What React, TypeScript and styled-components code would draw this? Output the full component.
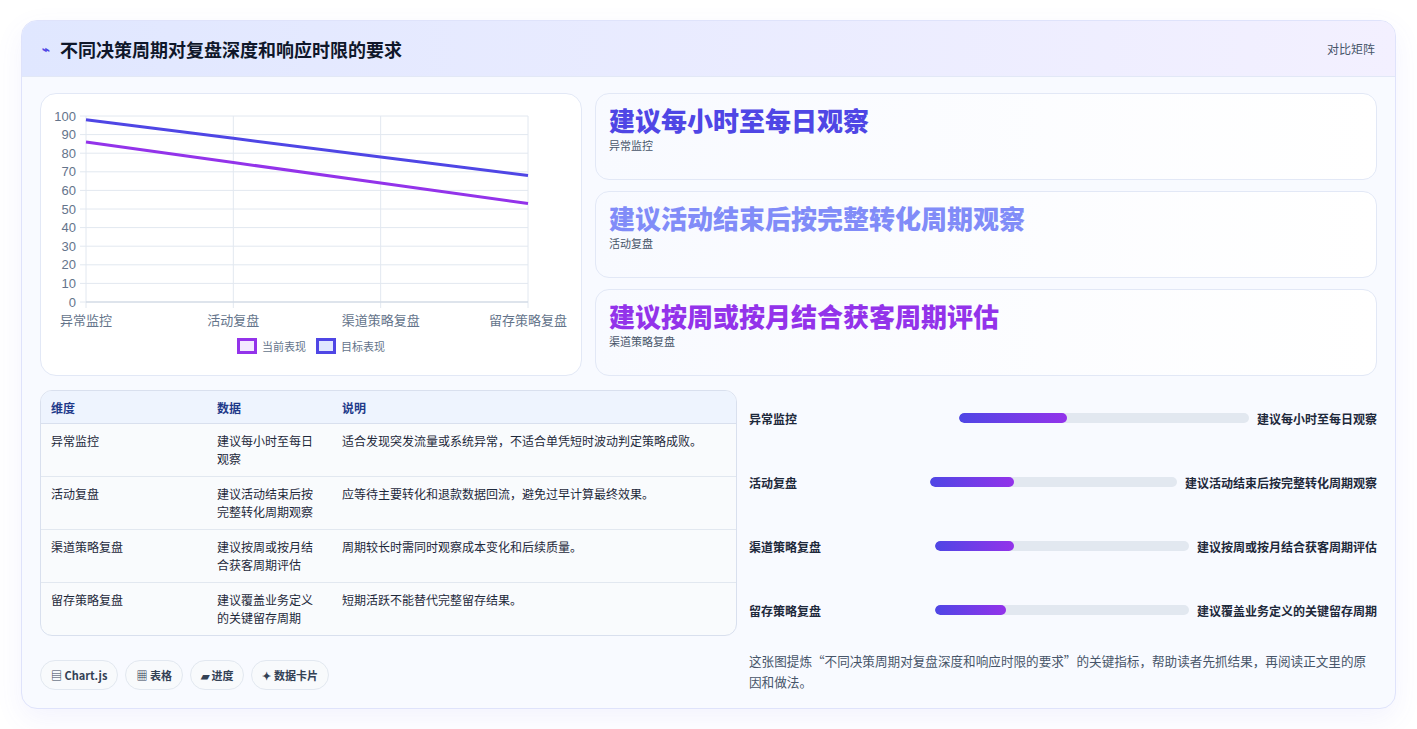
import React from "react";
import styled, { createGlobalStyle } from "styled-components";

const GlobalStyle = createGlobalStyle`
  body {
    margin: 0;
    background: #ffffff;
    font-family: "Noto Sans CJK SC", "Noto Sans", sans-serif;
    color: #1e293b;
  }
`;

const rows = [
  { dim: "异常监控", data: "建议每小时至每日观察", note: "适合发现突发流量或系统异常，不适合单凭短时波动判定策略成败。", pct: 37 },
  { dim: "活动复盘", data: "建议活动结束后按完整转化周期观察", note: "应等待主要转化和退款数据回流，避免过早计算最终效果。", pct: 34 },
  { dim: "渠道策略复盘", data: "建议按周或按月结合获客周期评估", note: "周期较长时需同时观察成本变化和后续质量。", pct: 31 },
  { dim: "留存策略复盘", data: "建议覆盖业务定义的关键留存周期", note: "短期活跃不能替代完整留存结果。", pct: 28 },
];

const current = [86, 75, 64, 53];
const target = [98, 88, 78, 68];

export default function App() {
  return (
    <>
      <GlobalStyle />
      <Page>
        <Card>
          <Header>
            <Title>
              <Spark>⌁</Spark>不同决策周期对复盘深度和响应时限的要求
            </Title>
            <HeaderTag>对比矩阵</HeaderTag>
          </Header>
          <Body>
            <TopRow>
              <ChartPanel>
                <LineChart />
                <Legend>
                  <LegendItem>
                    <Swatch $c="#9333ea" $bg="#f3e8ff" />当前表现
                  </LegendItem>
                  <LegendItem>
                    <Swatch $c="#4f46e5" $bg="#e0e7ff" />目标表现
                  </LegendItem>
                </Legend>
              </ChartPanel>
              <Highlights>
                <Highlight>
                  <BigText $c="#4f46e5">建议每小时至每日观察</BigText>
                  <SmallText>异常监控</SmallText>
                </Highlight>
                <Highlight>
                  <BigText $c="#818cf8">建议活动结束后按完整转化周期观察</BigText>
                  <SmallText>活动复盘</SmallText>
                </Highlight>
                <Highlight>
                  <BigText $c="#9333ea">建议按周或按月结合获客周期评估</BigText>
                  <SmallText>渠道策略复盘</SmallText>
                </Highlight>
              </Highlights>
            </TopRow>
            <BottomRow>
              <LeftCol>
                <Table>
                  <thead>
                    <tr>
                      <Th style={{ width: 146 }}>维度</Th>
                      <Th style={{ width: 105 }}>数据</Th>
                      <Th>说明</Th>
                    </tr>
                  </thead>
                  <tbody>
                    {rows.map((r) => (
                      <tr key={r.dim}>
                        <Td>{r.dim}</Td>
                        <Td>{r.data}</Td>
                        <Td>{r.note}</Td>
                      </tr>
                    ))}
                  </tbody>
                </Table>
                <Chips>
                  <Chip>▤ Chart.js</Chip>
                  <Chip>▦ 表格</Chip>
                  <Chip>▰ 进度</Chip>
                  <Chip>✦ 数据卡片</Chip>
                </Chips>
              </LeftCol>
              <RightCol>
                <Bars>
                  {rows.map((r) => (
                    <BarRow key={r.dim}>
                      <BarLabel>{r.dim}</BarLabel>
                      <Track>
                        <Fill style={{ width: `${r.pct}%` }} />
                      </Track>
                      <BarValue>{r.data}</BarValue>
                    </BarRow>
                  ))}
                </Bars>
                <Summary>
                  这张图提炼“不同决策周期对复盘深度和响应时限的要求”的关键指标，帮助读者先抓结果，再阅读正文里的原因和做法。
                </Summary>
              </RightCol>
            </BottomRow>
          </Body>
        </Card>
      </Page>
    </>
  );
}

function LineChart() {
  const x0 = 46, x1 = 488, y0 = 22, y1 = 208;
  const xs = [0, 1, 2, 3].map((i) => x0 + ((x1 - x0) * i) / 3);
  const yv = (v: number) => y1 - ((y1 - y0) * v) / 100;
  const labels = ["异常监控", "活动复盘", "渠道策略复盘", "留存策略复盘"];
  const pts = (d: number[]) => d.map((v, i) => `${xs[i]},${yv(v)}`).join(" ");
  return (
    <svg width="542" height="236" viewBox="0 0 542 236">
      {Array.from({ length: 11 }, (_, i) => i * 10).map((v) => (
        <g key={v}>
          <line x1={x0 - 6} x2={x1} y1={yv(v)} y2={yv(v)} stroke="#e2e8f0" />
          <text x={x0 - 10} y={yv(v) + 4.5} textAnchor="end" fontSize="13" fill="#64748b" fontFamily="Liberation Sans, sans-serif">
            {v}
          </text>
        </g>
      ))}
      {xs.map((x, i) => (
        <g key={i}>
          <line x1={x} x2={x} y1={y0} y2={y1 + 6} stroke="#e2e8f0" />
          <text x={x} y={y1 + 23} textAnchor="middle" fontSize="13" fill="#64748b">
            {labels[i]}
          </text>
        </g>
      ))}
      <line x1={x0} x2={x1} y1={y1} y2={y1} stroke="#cbd5e1" />
      <polyline points={pts(target)} fill="none" stroke="#4f46e5" strokeWidth="3" />
      <polyline points={pts(current)} fill="none" stroke="#9333ea" strokeWidth="3" />
    </svg>
  );
}

const Page = styled.div`
  padding: 20px 21px 21px 21px;
`;

const Card = styled.div`
  border: 1px solid #dfe3fb;
  border-radius: 16px;
  background: #f8faff;
  overflow: hidden;
  box-shadow: 0 10px 28px rgba(99, 102, 241, 0.08);
`;

const Header = styled.div`
  height: 55px;
  padding: 0 20px;
  display: flex;
  align-items: center;
  justify-content: space-between;
  background: linear-gradient(90deg, #e0e7ff, #f3f0ff);
  border-bottom: 1px solid #e2e8f6;
`;

const Title = styled.h1`
  margin: 0;
  font-size: 18px;
  font-weight: 700;
  color: #0f172a;
  display: flex;
  align-items: center;
  gap: 10px;
`;

const Spark = styled.span`
  color: #4f46e5;
  font-size: 13px;
`;

const HeaderTag = styled.span`
  font-size: 12px;
  color: #475569;
`;

const Body = styled.div`
  padding: 16px 18px 16px 18px;
  display: flex;
  flex-direction: column;
  gap: 14px;
`;

const TopRow = styled.div`
  display: flex;
  gap: 13px;
`;

const ChartPanel = styled.div`
  width: 542px;
  height: 283px;
  box-sizing: border-box;
  background: #fff;
  border: 1px solid #e2e8f6;
  border-radius: 16px;
  display: flex;
  flex-direction: column;
  align-items: center;
`;

const Legend = styled.div`
  display: flex;
  gap: 10px;
  font-size: 11px;
  color: #64748b;
  margin-top: 8px;
`;

const LegendItem = styled.span`
  display: flex;
  align-items: center;
  gap: 5px;
`;

const Swatch = styled.span<{ $c: string; $bg: string }>`
  width: 14px;
  height: 10px;
  border: 3px solid ${(p) => p.$c};
  background: ${(p) => p.$bg};
`;

const Highlights = styled.div`
  flex: 1;
  display: flex;
  flex-direction: column;
  gap: 11px;
`;

const Highlight = styled.div`
  height: 87px;
  box-sizing: border-box;
  padding: 9px 13px;
  background: linear-gradient(90deg, #f8faff, #ffffff);
  border: 1px solid #e2e8f6;
  border-radius: 14px;
`;

const BigText = styled.div<{ $c: string }>`
  font-size: 26px;
  font-weight: 900;
  line-height: 34px;
  color: ${(p) => p.$c};
`;

const SmallText = styled.div`
  font-size: 11px;
  color: #475569;
  margin-top: 0px;
`;

const BottomRow = styled.div`
  display: flex;
  gap: 12px;
`;

const LeftCol = styled.div`
  width: 697px;
  display: flex;
  flex-direction: column;
  gap: 24px;
`;

const Table = styled.table`
  width: 100%;
  border-collapse: separate;
  border-spacing: 0;
  border: 1px solid #d9e0ee;
  border-radius: 12px;
  overflow: hidden;
  background: #f9fbfd;
  font-size: 12px;
`;

const Th = styled.th`
  text-align: left;
  font-weight: 700;
  color: #1e3a8a;
  background: #eef4fe;
  padding: 8px 10px 7px;
  border-bottom: 1px solid #d9e0ee;
`;

const Td = styled.td`
  vertical-align: top;
  padding: 8px 10px 8px;
  color: #1e293b;
  line-height: 18px;
  height: 36px;
  border-bottom: 1px solid #e2e8f0;
  tr:last-child & {
    border-bottom: none;
  }
`;

const Chips = styled.div`
  display: flex;
  gap: 7px;
`;

const Chip = styled.span`
  padding: 6px 10px;
  border: 1px solid #e2e8f0;
  border-radius: 999px;
  background: #f8fafc;
  font-size: 11px;
  font-weight: 700;
  color: #334155;
`;

const RightCol = styled.div`
  flex: 1;
  display: flex;
  flex-direction: column;
`;

const Bars = styled.div`
  display: flex;
  flex-direction: column;
  gap: 46px;
  padding-top: 19px;
`;

const BarRow = styled.div`
  display: flex;
  align-items: center;
  gap: 8px;
  height: 18px;
  font-size: 12px;
  font-weight: 600;
  color: #1e293b;
`;

const BarLabel = styled.span`
  flex: 1;
  white-space: nowrap;
`;

const Track = styled.div`
  flex: 1.43;
  height: 10px;
  border-radius: 5px;
  background: #e2e8f0;
  overflow: hidden;
`;

const Fill = styled.div`
  height: 100%;
  border-radius: 5px;
  background: linear-gradient(90deg, #4f46e5, #9333ea);
`;

const BarValue = styled.span`
  white-space: nowrap;
`;

const Summary = styled.p`
  margin: 31px 0 0;
  font-size: 12.6px;
  line-height: 21px;
  color: #475569;
`;
